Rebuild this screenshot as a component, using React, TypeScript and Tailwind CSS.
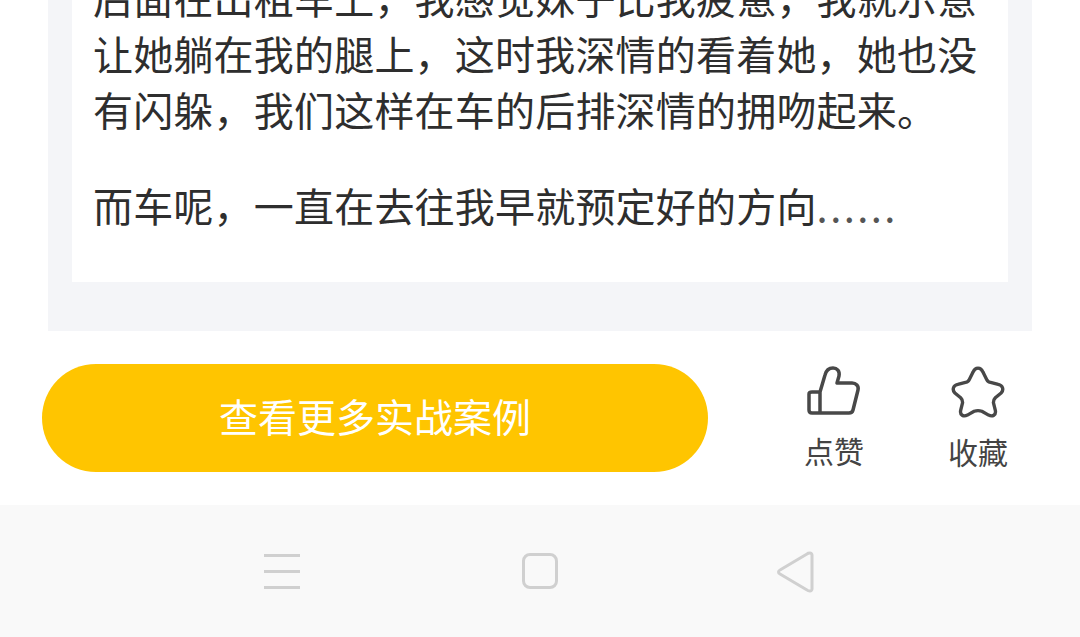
const font = "font-['Noto_Sans_CJK_SC','Noto_Sans',sans-serif]";

const ThumbIcon = () => (
    <svg className="mt-[2px]" width="54" height="50" viewBox="0 0 54 50" fill="none" stroke="#484848" strokeWidth="3.5" strokeLinejoin="round" strokeLinecap="round">
        <path d="M13 47V26L18 9C19 5 22 2 26 2C30 2 33 5 32 10L30 17H45C49 17 52 20 51 24L46 44C45.5 46 44 47 42 47H5C3 47 2 46 2 44V28C2 27 3 26 5 26H13" />
    </svg>
);

const StarIcon = () => (
    <svg className="mt-[2px]" width="54" height="52" viewBox="0 0 56 54" fill="none" stroke="#484848" strokeWidth="3.5" strokeLinejoin="round">
        <path d="M23 6C25 1 31 1 33 6L37 14C38 16 39 17 41 17L49 19C54 20 55 25 52 28L46 33C44 35 44 36 44 38L46 46C47 51 43 53 39 51L32 47C29 46 27 46 24 47L17 51C13 53 9 51 10 46L12 38C12 36 12 35 10 33L4 28C1 25 2 20 7 19L15 17C17 17 18 16 19 14Z" />
    </svg>
);

const App = () => {
    return (
        <div className={`h-[637px] w-[1080px] overflow-hidden flex flex-col bg-white ${font}`}>
            <div className="flex-1 min-h-0 flex flex-col justify-end">
                <div className="mx-[48px] px-[24px] pb-[49px] bg-[#f4f5f8]">
                    <div className="bg-white pl-[21px] pr-[20px] pb-[49px] text-[40px] tracking-[0.2px] leading-[56px] text-[#2e2e2e]">
                        <p className="whitespace-nowrap">后面在出租车上，我感觉妹子比我疲惫，我就示意</p>
                        <p className="whitespace-nowrap">让她躺在我的腿上，这时我深情的看着她，她也没</p>
                        <p className="whitespace-nowrap">有闪躲，我们这样在车的后排深情的拥吻起来。</p>
                        <p className="whitespace-nowrap mt-[40px]">而车呢，一直在去往我早就预定好的方向<span className="tracking-[2.4px] text-[#555]">......</span></p>
                    </div>
                </div>
            </div>

            <div className="h-[174px] shrink-0 bg-white flex items-start pt-[33px] pl-[42px]">
                <div className="w-[666px] h-[108px] pb-[6px] rounded-full bg-[#ffc500] flex items-center justify-center text-white text-[39px]">
                    查看更多实战案例
                </div>
                <div className="flex flex-col items-center w-[80px] ml-[86px] text-[30px] leading-[40px] text-[#444]">
                    <ThumbIcon />
                    <span className="mt-[14px]">点赞</span>
                </div>
                <div className="flex flex-col items-center w-[80px] ml-[64px] text-[30px] leading-[40px] text-[#444]">
                    <StarIcon />
                    <span className="mt-[13px]">收藏</span>
                </div>
            </div>

            <div className="h-[132px] shrink-0 bg-[#f9f9f9] flex items-center pl-[264px]">
                <div className="w-[36px] flex flex-col gap-[13px]">
                    <div className="h-[3px] bg-[#d0d0d0]" />
                    <div className="h-[3px] bg-[#d0d0d0]" />
                    <div className="h-[3px] bg-[#d0d0d0]" />
                </div>
                <div className="w-[36px] h-[36px] ml-[222px] rounded-[8px] border-[3px] border-[#d0d0d0]" />
                <svg className="ml-[218px] mt-[1px]" width="38" height="42" viewBox="0 0 38 42" fill="none" stroke="#d0d0d0" strokeWidth="3" strokeLinejoin="round">
                    <path d="M34 2C35 2 36 3 36 4V38C36 39 35 40 34 40C33 40 32 40 31 39L4 23C2 22 2 20 4 19L31 3C32 2 33 2 34 2Z" />
                </svg>
            </div>
        </div>
    );
};

export default App;
